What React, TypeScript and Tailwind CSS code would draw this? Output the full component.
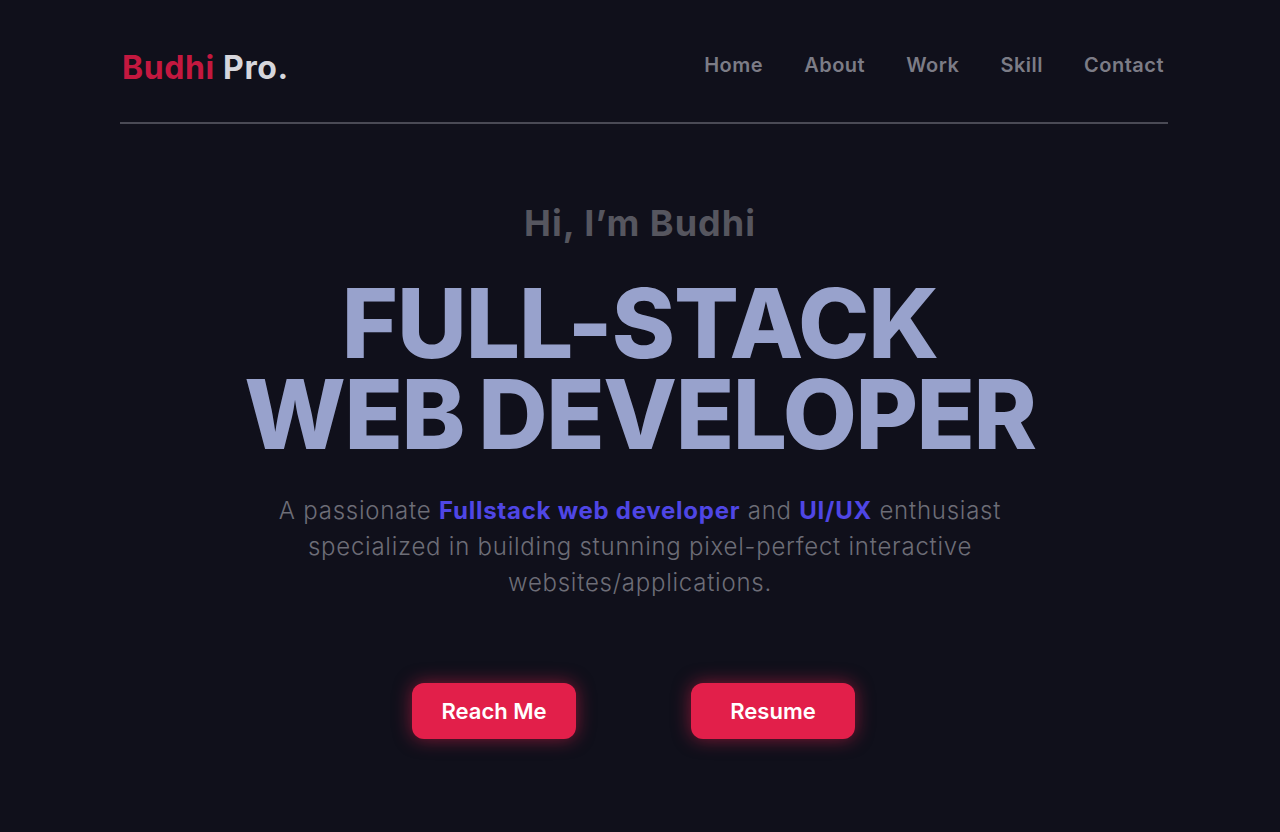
import React from "react";

export default function App() {
  const font = { fontFamily: "Inter, 'Noto Sans', sans-serif" };
  return (
    <div className="min-h-[832px] w-full bg-[#10101b]" style={font}>
      <header className="ml-[120px] w-[1048px] pt-[44px]">
        <div className="flex items-center justify-between pb-[30px] pl-[2px] pr-[4px]">
          <div className="text-[32px] font-bold leading-[48px] tracking-[0.6px]">
            <span className="text-[#c3183f]">Budhi</span>{" "}
            <span className="text-[#d6d6dc]">Pro.</span>
          </div>
          <nav className="flex items-center gap-[41px] text-[20px] font-semibold tracking-[0.5px] text-[#7c7c86] -mt-[6px]">
            <a>Home</a>
            <a>About</a>
            <a>Work</a>
            <a>Skill</a>
            <a>Contact</a>
          </nav>
        </div>
        <div className="h-[2px] bg-[#4a4a55]" />
      </header>

      <main className="flex flex-col items-center pt-[75px]">
        <h2 className="text-[36px] font-bold leading-[48px] tracking-[1px] text-[#56565f]">Hi, I’m Budhi</h2>
        <h1 className="mt-[31px] text-center text-[96px] font-extrabold uppercase leading-[91px] tracking-[-1px] text-[#98a2cc]">
          Full-Stack
          <br />
          <span className="tracking-[-1.5px] [word-spacing:-5px]">Web Developer</span>
        </h1>
        <p className="mt-[33px] w-[760px] text-center text-[24px] font-light leading-[36px] tracking-[0.75px] text-[#6d6d77]">
          A passionate <span className="font-bold text-[#4f46e5]">Fullstack web developer</span> and{" "}
          <span className="font-bold text-[#4f46e5]">UI/UX</span> enthusiast specialized in building stunning
          pixel-perfect interactive websites/applications.
        </p>
        <div className="mt-[82px] mr-[13px] flex gap-[115px]">
          <button className="h-[56px] w-[164px] rounded-[12px] bg-[#e21f4a] text-[22px] font-semibold text-white shadow-[0_0_18px_rgba(226,31,74,0.55)]">
            Reach Me
          </button>
          <button className="h-[56px] w-[164px] rounded-[12px] bg-[#e21f4a] text-[22px] font-semibold text-white shadow-[0_0_18px_rgba(226,31,74,0.55)]">
            Resume
          </button>
        </div>
      </main>
    </div>
  );
}
